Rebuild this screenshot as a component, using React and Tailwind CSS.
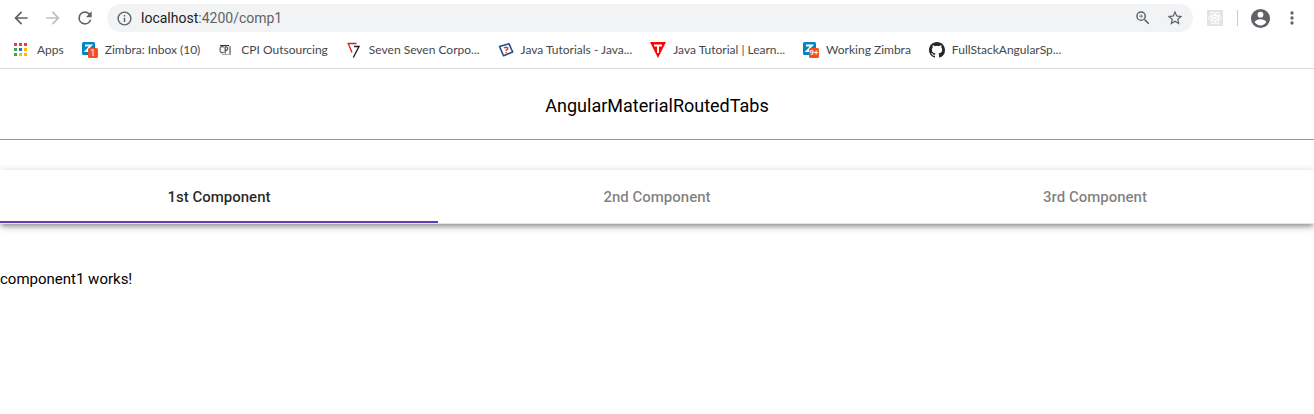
import React, { useState } from "react";

function Icon({ d, className }) {
  return (
    <svg viewBox="0 0 24 24" className={className} fill="currentColor" aria-hidden="true">
      <path d={d} />
    </svg>
  );
}

const BACK = "M20 11H7.83l5.59-5.59L12 4l-8 8 8 8 1.41-1.41L7.83 13H20v-2z";
const FORWARD = "M12 4l-1.41 1.41L16.17 11H4v2h12.17l-5.58 5.59L12 20l8-8z";
const RELOAD =
  "M17.65 6.35A7.96 7.96 0 0 0 12 4a8 8 0 1 0 7.73 10h-2.08A6 6 0 1 1 12 6c1.66 0 3.14.69 4.22 1.78L13 11h7V4l-2.35 2.35z";
const INFO =
  "M11 7h2v2h-2zm0 4h2v6h-2zm1-9a10 10 0 1 0 0 20 10 10 0 0 0 0-20zm0 18a8 8 0 1 1 0-16 8 8 0 0 1 0 16z";
const ZOOM =
  "M15.5 14h-.79l-.28-.27A6.47 6.47 0 0 0 16 9.5 6.5 6.5 0 1 0 9.5 16c1.61 0 3.09-.59 4.23-1.57l.27.28v.79l5 4.99L20.49 19l-4.99-5zm-6 0a4.5 4.5 0 1 1 0-9 4.5 4.5 0 0 1 0 9zm.5-7H9v2H7v1h2v2h1v-2h2V9h-2V7z";
const STAR =
  "M22 9.24l-7.19-.62L12 2 9.19 8.63 2 9.24l5.46 4.73L5.82 21 12 17.27 18.18 21l-1.63-7.03L22 9.24zM12 15.4l-3.76 2.27 1-4.28-3.32-2.88 4.38-.38L12 6.1l1.71 4.04 4.38.38-3.32 2.88 1 4.28L12 15.4z";
const PERSON =
  "M12 2a10 10 0 1 0 0 20 10 10 0 0 0 0-20zm0 3a3 3 0 1 1 0 6 3 3 0 0 1 0-6zm0 14.2a7.2 7.2 0 0 1-6-3.22c.03-1.99 4-3.08 6-3.08 1.99 0 5.97 1.09 6 3.08a7.2 7.2 0 0 1-6 3.22z";
const DOTS =
  "M12 8a2 2 0 1 0 0-4 2 2 0 0 0 0 4zm0 2a2 2 0 1 0 0 4 2 2 0 0 0 0-4zm0 6a2 2 0 1 0 0 4 2 2 0 0 0 0-4z";

function AppsIcon() {
  const colors = ["#ea4335", "#ea4335", "#ea4335", "#34a853", "#1a73e8", "#fbbc04", "#34a853", "#fbbc04", "#fbbc04"];
  return (
    <svg viewBox="0 0 16 16" className="size-4" shapeRendering="crispEdges" aria-hidden="true">
      {colors.map((c, i) => (
        <rect key={i} x={(i % 3) * 5} y={1 + Math.floor(i / 3) * 5} width="3" height="3" fill={c} />
      ))}
    </svg>
  );
}

function ZimbraIcon({ count }) {
  const wide = count.length > 1;
  return (
    <span className="relative block size-4">
      <svg viewBox="0 0 16 16" className="size-4" aria-hidden="true">
        <rect width="13" height="13" rx="1.500" fill="#0087c3" />
        <path d="M3 3.500h6L3.800 9h5" stroke="#fff" strokeWidth="1.800" fill="none" />
        <rect x="6" y="6" width="10" height="10" rx="1.500" fill="#f4511e" />
      </svg>
      <span className={`absolute right-0 bottom-0 w-[10px] text-center font-[Roboto,sans-serif] leading-[10px] text-white ${wide ? "text-[8px] font-medium" : "text-[9px]"}`}>
        {count}
      </span>
    </span>
  );
}

function CpiIcon() {
  return (
    <svg viewBox="0 0 16 16" className="size-4" fill="none" aria-hidden="true">
      <path d="M5.500 5.500C4.500 3.500 2 4.500 2 7.500s2 4 3.800 2.600" stroke="#666" strokeWidth="1.300" />
      <path d="M7.200 11.500V5c3-.8 3.300 3.500.3 3.500" stroke="#555" strokeWidth="1.300" />
      <path d="M2 3.500h9M12 5v7" stroke="#333" />
      <path d="M10.500 4.500h2.500M4 12.500h9" stroke="#aaa" />
    </svg>
  );
}

function SevenIcon() {
  return (
    <svg viewBox="0 0 16 16" className="size-4" fill="none" aria-hidden="true">
      <path d="M10.500 1.500H2.200l3.800 9" stroke="#d32020" strokeWidth="1.300" />
      <path d="M8 4.500h5L7.300 15.500" stroke="#222" strokeWidth="1.400" />
    </svg>
  );
}

function JavaIcon() {
  return (
    <svg viewBox="0 0 16 16" className="size-4" fill="none" aria-hidden="true">
      <path d="M1.500 4.500 11 1.800 14.700 10 5.500 13.700z" stroke="#1d4f91" strokeWidth="1.600" strokeLinejoin="round" />
      <path d="M6 5.800c3-1.600 5.500.4 2.200 2.400v.8M8.300 10v1.300" stroke="#e53935" strokeWidth="1.500" />
    </svg>
  );
}

function TriangleIcon() {
  return (
    <svg viewBox="0 0 16 16" className="size-4" aria-hidden="true">
      <path d="M0 0h16L8 16z" fill="#f00" />
      <path d="M4 2.500h8v2H9V11H7V4.500H4z" fill="#fff" />
    </svg>
  );
}

function GithubIcon() {
  return (
    <svg viewBox="0 0 16 16" className="size-4" fill="#24292e" aria-hidden="true">
      <path d="M8 0C3.580 0 0 3.580 0 8c0 3.540 2.290 6.530 5.470 7.590.4.070.55-.17.55-.38 0-.19-.01-.82-.01-1.490-2.010.37-2.530-.49-2.690-.94-.09-.23-.48-.94-.82-1.130-.28-.15-.68-.52-.01-.53.63-.01 1.080.58 1.230.82.72 1.210 1.870.87 2.330.66.07-.52.28-.87.51-1.070-1.780-.2-3.640-.89-3.640-3.950 0-.87.31-1.590.82-2.150-.08-.2-.36-1.020.08-2.120 0 0 .67-.21 2.200.82a7.600 7.600 0 0 1 4 0c1.530-1.040 2.200-.82 2.200-.82.44 1.100.16 1.920.08 2.120.51.56.82 1.270.82 2.150 0 3.070-1.870 3.750-3.650 3.950.29.25.54.73.54 1.480 0 1.070-.01 1.930-.01 2.200 0 .21.15.46.55.38A8 8 0 0 0 16 8c0-4.420-3.580-8-8-8z" />
    </svg>
  );
}

function ReactExtension() {
  return (
    <svg viewBox="0 0 16 16" className="size-4" fill="none" aria-hidden="true">
      <rect width="16" height="16" fill="#e2e3e4" />
      <g stroke="#fff">
        <ellipse cx="8" cy="8" rx="6.500" ry="2.500" />
        <ellipse cx="8" cy="8" rx="6.500" ry="2.500" transform="rotate(60 8 8)" />
        <ellipse cx="8" cy="8" rx="6.500" ry="2.500" transform="rotate(120 8 8)" />
      </g>
      <circle cx="8" cy="8" r="1.300" fill="#fff" />
    </svg>
  );
}

const bookmarks = [
  { label: "Apps", icon: <AppsIcon /> },
  { label: "Zimbra: Inbox (10)", icon: <ZimbraIcon count="1" /> },
  { label: "CPI Outsourcing", icon: <CpiIcon /> },
  { label: "Seven Seven Corpo...", icon: <SevenIcon /> },
  { label: "Java Tutorials - Java...", icon: <JavaIcon /> },
  { label: "Java Tutorial | Learn...", icon: <TriangleIcon /> },
  { label: "Working Zimbra", icon: <ZimbraIcon count="9+" /> },
  { label: "FullStackAngularSp...", icon: <GithubIcon /> },
];

function BrowserBar() {
  const [url, setUrl] = useState("/comp1");
  return (
    <header className="border-b border-[#dadce0] text-[#5f6368]">
      <div className="flex h-9 items-center pr-3 pl-[11px]">
        <div className="flex gap-3">
          <button aria-label="Back"><Icon d={BACK} className="size-5" /></button>
          <button aria-label="Forward" className="text-[#bdc1c6]"><Icon d={FORWARD} className="size-5" /></button>
          <button aria-label="Reload"><Icon d={RELOAD} className="size-5" /></button>
        </div>
        <div className="ml-3 flex h-7 flex-1 items-center rounded-full bg-[#f1f3f4] px-[9px]">
          <button aria-label="Site information"><Icon d={INFO} className="size-[17px]" /></button>
          <label className="ml-2 flex flex-1 items-center text-sm">
            <span className="text-[#202124]">localhost</span>
            <span>:4200</span>
            <input
              aria-label="Address"
              value={url}
              onChange={(e) => setUrl(e.target.value)}
              className="min-w-0 flex-1 bg-transparent outline-none"
            />
          </label>
          <div className="flex gap-3.5">
            <button aria-label="Zoom"><Icon d={ZOOM} className="size-[18px]" /></button>
            <button aria-label="Bookmark this page"><Icon d={STAR} className="size-[18px]" /></button>
          </div>
        </div>
        <button aria-label="React extension" className="ml-3.5"><ReactExtension /></button>
        <span className="ml-3.5 h-4 w-px bg-[#c8cacd]" />
        <button aria-label="Profile" className="ml-[11px]"><Icon d={PERSON} className="size-[23px]" /></button>
        <button aria-label="Menu" className="ml-2.5"><Icon d={DOTS} className="size-5" /></button>
      </div>
      <nav aria-label="Bookmarks" className="flex h-8 items-start gap-[18px] overflow-hidden pt-1.5 pl-3.5">
        {bookmarks.map((b) => (
          <a key={b.label} href="#" className="flex shrink-0 items-center gap-[7px] font-[Lato,sans-serif] text-xs leading-4 whitespace-nowrap text-[#45484c]">
            {b.icon}
            {b.label}
          </a>
        ))}
      </nav>
    </header>
  );
}

const tabs = [
  { label: "1st Component", body: "component1 works!" },
  { label: "2nd Component", body: "component2 works!" },
  { label: "3rd Component", body: "component3 works!" },
];

export default function App() {
  const [active, setActive] = useState(0);
  return (
    <div className="min-h-screen overflow-x-hidden bg-white font-[Roboto,sans-serif]">
      <BrowserBar />
      <main>
        <h1 className="border-b border-[#999] pt-6 pb-5 text-center text-lg leading-[26px] text-black">
          AngularMaterialRoutedTabs
        </h1>
        <div
          role="tablist"
          className="mt-[30px] grid grid-cols-3 border-b border-black/10 shadow-[0_3px_5px_-1px_rgba(0,0,0,0.35),0_2px_9px_rgba(0,0,0,0.2)]"
        >
          {tabs.map((t, i) => (
            <button
              key={t.label}
              id={`tab-${i}`}
              role="tab"
              aria-selected={i === active}
              aria-controls="tab-panel"
              onClick={() => setActive(i)}
              className={`h-[53px] border-b-2 pt-[3px] text-[15px] font-medium ${
                i === active ? "border-[#673ab7] text-black/85" : "border-transparent text-black/50"
              }`}
            >
              {t.label}
            </button>
          ))}
        </div>
        <div id="tab-panel" role="tabpanel" aria-labelledby={`tab-${active}`} className="pt-[43px] text-[15px] leading-6 text-black">
          {tabs[active].body}
        </div>
      </main>
    </div>
  );
}
